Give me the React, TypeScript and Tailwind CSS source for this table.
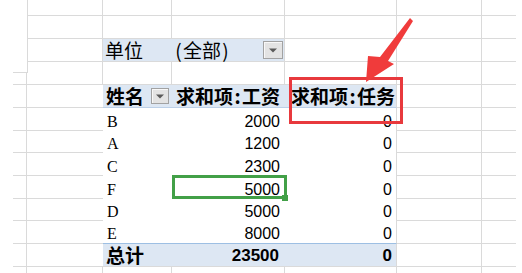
import React from "react"
import clsx from "clsx"

// column widths of the sheet, from column A (x=28) to the right edge
const W = ["w-[75px]", "w-[69px]", "w-[113px]", "w-[112px]", "w-[85px]", "w-[34px]"]

const BR = "border-b border-r border-[#dadada]"
const B = "border-b border-[#dadada]"
const R = "border-r border-[#dadada]"
const BLUE = "bg-[#dde7f3]"

const CJK = "font-['Noto_Sans_CJK_SC',sans-serif] text-[19px] leading-[22px] items-center"
const NAME = "font-['Liberation_Serif',serif] text-[16px] leading-[16px] items-end pl-[4px] pb-[1px]"
const NUM = "font-['Liberation_Sans',Arial,sans-serif] text-[16px] leading-[16px] items-end justify-end pb-[1px]"

type Spec = { cls?: string; children?: React.ReactNode }

function Row({ h, cells }: { h: string; cells: Spec[] }) {
    return (
        <div className={clsx("flex shrink-0", h)}>
            {cells.map((c, i) => (
                <div key={i} className={clsx("flex shrink-0 text-black", W[i], c.cls)}>
                    {c.children}
                </div>
            ))}
        </div>
    )
}

function DropBtn({ className }: { className?: string }) {
    return (
        <div className={clsx("flex items-center justify-center border border-[#a2a2a2] bg-[#e3e3e3] shadow-[inset_1px_1px_0_#f8f8f8]", className)}>
            <svg width="8" height="5" viewBox="0 0 8 5">
                <path d="M0 0.5H8L4 4.5Z" fill="#5a5a5a" />
            </svg>
        </div>
    )
}

const Colon = () => <span className="inline-block w-[9px] text-center">:</span>

const plain: Spec[] = [{ cls: BR }, { cls: BR }, { cls: BR }, { cls: BR }, { cls: BR }, { cls: B }]

const people = [
    { name: "B", pay: "2000", h: "h-[23px]" },
    { name: "A", pay: "1200", h: "h-[22px]" },
    { name: "C", pay: "2300", h: "h-[23px]" },
    { name: "F", pay: "5000", h: "h-[23px]", active: true },
    { name: "D", pay: "5000", h: "h-[22px]" },
    { name: "E", pay: "8000", h: "h-[23px]", last: true },
]

function Gutter() {
    const hs = ["h-[12px]", "h-[23px]", "h-[23px]", "h-[22px]", "h-[23px]", "h-[23px]", "h-[22px]", "h-[23px]", "h-[23px]"]
    return (
        <div className="w-[28px] shrink-0 flex flex-col">
            <div className="h-[72px] shrink-0 border-r border-[#dadada]" />
            <div className="ml-[13px] w-[15px] flex-1 border-t border-[#dadada]">
                <div className="w-[14px] h-full border-r border-[#dadada] flex flex-col">
                    {hs.map((h, i) => (
                        <div key={i} className={clsx("w-[15px] shrink-0 border-b border-[#dadada]", h)} />
                    ))}
                </div>
            </div>
        </div>
    )
}

export default function App() {
    return (
        <div className="relative w-[522px] h-[273px] bg-white overflow-hidden flex">
            <Gutter />
            <div className="flex flex-col">
                <Row h="h-[16px]" cells={plain} />
                <Row h="h-[23px]" cells={plain} />
                <Row
                    h="h-[23px]"
                    cells={[
                        { cls: BR },
                        { cls: clsx(B, BLUE, CJK, "pl-[2px]"), children: "单位" },
                        {
                            cls: clsx(BR, BLUE, CJK, "pl-[2px]"),
                            children: (
                                <>
                                    <span className="inline-block w-[9px] text-center">(</span>全部
                                    <span className="inline-block w-[9px] text-center">)</span>
                                    <DropBtn className="ml-auto mr-[1px] w-[20px] h-[18px]" />
                                </>
                            ),
                        },
                        { cls: BR },
                        { cls: BR },
                        { cls: B },
                    ]}
                />
                <Row h="h-[23px]" cells={plain} />
                {/* pivot header */}
                <Row
                    h="h-[23px]"
                    cells={[
                        { cls: B },
                        {
                            cls: clsx("border-b border-[#bcd0e8] font-bold pl-[3px]", BLUE, CJK),
                            children: (
                                <>
                                    姓名
                                    <DropBtn className="ml-auto mr-[3px] w-[18px] h-[16px]" />
                                </>
                            ),
                        },
                        {
                            cls: clsx("border-b border-[#bcd0e8] font-bold pl-[4px] whitespace-nowrap", BLUE, CJK),
                            children: (
                                <span>
                                    求和项<Colon />工资
                                </span>
                            ),
                        },
                        {
                            cls: clsx("border-b border-r border-b-[#bcd0e8] border-r-[#dadada] font-bold pl-[6px] whitespace-nowrap", BLUE, CJK),
                            children: (
                                <span>
                                    求和项<Colon />任务
                                </span>
                            ),
                        },
                        { cls: BR },
                        { cls: B },
                    ]}
                />
                {people.map((p) => (
                    <Row
                        key={p.name}
                        h={p.h}
                        cells={[
                            { cls: B },
                            { cls: clsx(NAME, p.last && "border-b border-[#9dbfe3]"), children: p.name },
                            {
                                cls: clsx(NUM, "pr-[5px]", p.active && "relative", p.last && "border-b border-[#9dbfe3]"),
                                children: (
                                    <>
                                        {p.pay}
                                        {p.active && (
                                            <>
                                                <div className="absolute left-0 -top-[1px] w-[115px] h-[24px] border-[3px] border-[#42a047]" />
                                                <div className="absolute left-[110px] top-[19px] w-[6px] h-[6px] bg-[#42a047]" />
                                            </>
                                        )}
                                    </>
                                ),
                            },
                            {
                                cls: clsx(NUM, "pr-[4px] border-r border-r-[#dadada]", p.last && "border-b border-b-[#9dbfe3]"),
                                children: "0",
                            },
                            { cls: BR },
                            { cls: B },
                        ]}
                    />
                ))}
                {/* grand total */}
                <Row
                    h="h-[23px]"
                    cells={[
                        { cls: B },
                        { cls: clsx(B, BLUE, CJK, "font-bold pl-[3px]"), children: "总计" },
                        { cls: clsx(B, BLUE, NUM, "font-bold text-[17px] pr-[6px] pb-[2px]"), children: "23500" },
                        { cls: clsx(BR, BLUE, NUM, "font-bold text-[17px] pr-[4px] pb-[2px]"), children: "0" },
                        { cls: BR },
                        { cls: B },
                    ]}
                />
                <Row h="h-[6px]" cells={[{ cls: R }, { cls: R }, { cls: R }, { cls: R }, { cls: R }, {}]} />
            </div>

            {/* callout */}
            <div className="absolute left-[289px] top-[77px] w-[114px] h-[47px] border-[3px] border-[#e8393d]" />
            <svg className="absolute left-0 top-0 pointer-events-none" width="522" height="273">
                <polygon points="410,18 413,21 388,61 394,64 366,82 368,56 380,57" fill="#f03b3b" />
            </svg>
        </div>
    )
}
